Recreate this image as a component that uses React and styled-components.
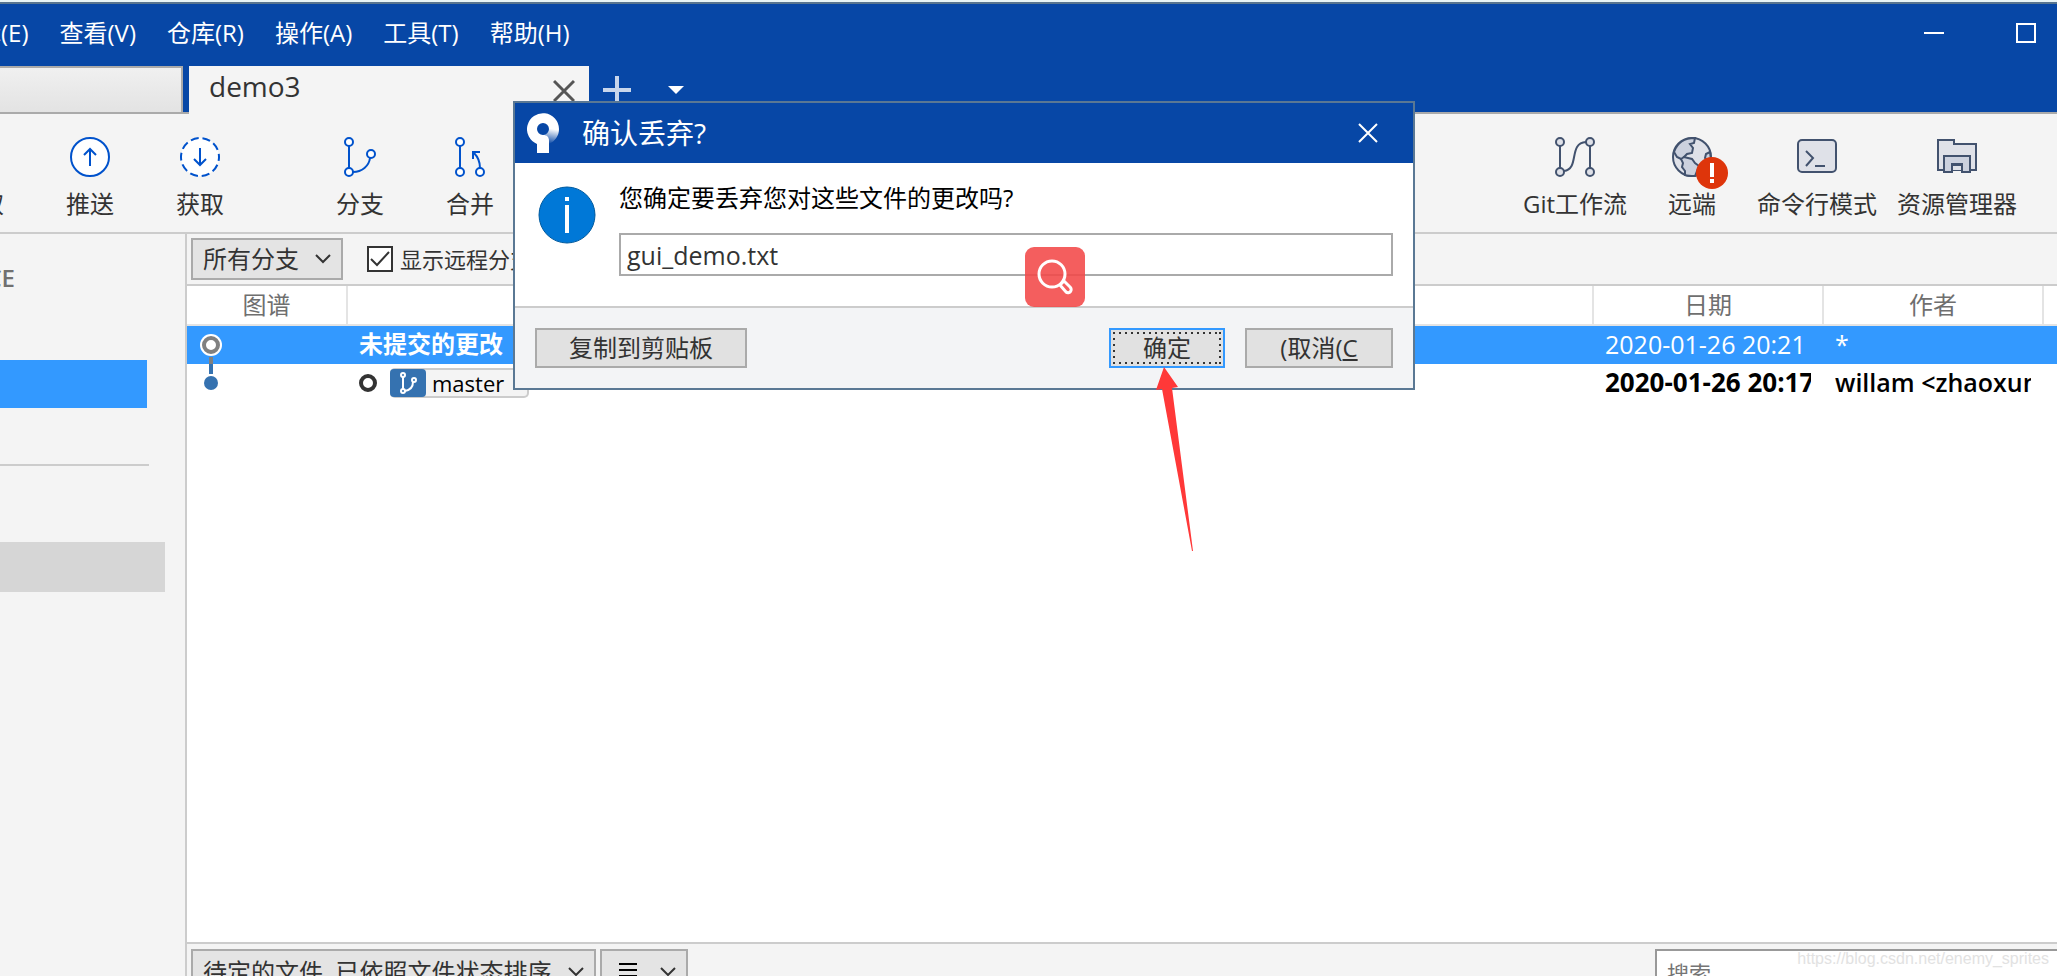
import React from 'react';
import styled, { createGlobalStyle, css } from 'styled-components';

const GlobalStyle = createGlobalStyle`
  * {
    box-sizing: border-box;
  }
  body {
    margin: 0;
    overflow: hidden;
    background: #f4f4f4;
    color: #333;
    font-family: 'Open Sans', 'Noto Sans CJK SC', sans-serif;
    font-size: 24px;
    line-height: 32px;
  }
  button, input, select {
    font: inherit;
    color: inherit;
  }
`;

const menuItems = ['编辑(E)', '查看(V)', '仓库(R)', '操作(A)', '工具(T)', '帮助(H)'];

const PushIcon = () => (
  <svg width="40" height="40" viewBox="0 0 40 40" fill="none" stroke="#0052cc" strokeWidth="2">
    <circle cx="20" cy="20" r="19" fill="#fff" />
    <path d="M20 29V12M14 18l6-6 6 6" />
  </svg>
);

const FetchIcon = () => (
  <svg width="40" height="40" viewBox="0 0 40 40" fill="none" stroke="#0052cc" strokeWidth="2">
    <circle cx="20" cy="20" r="19" fill="#fff" strokeDasharray="8 3.94" strokeDashoffset="4" />
    <path d="M20 11v17M14 22l6 6 6-6" />
  </svg>
);

const BranchIcon = () => (
  <svg width="34" height="40" viewBox="0 0 34 40" fill="#fff" stroke="#0052cc" strokeWidth="2">
    <path d="M6 9v22M10 35c9 0 16-6 17-14" fill="none" />
    <circle cx="6" cy="5" r="4" />
    <circle cx="6" cy="35" r="4" />
    <circle cx="28" cy="17" r="4" />
  </svg>
);

const MergeIcon = () => (
  <svg width="34" height="40" viewBox="0 0 34 40" fill="#fff" stroke="#0052cc" strokeWidth="2">
    <path d="M7 9v22M27 31c0-7-2-11-6-15M20 22v-7h7" fill="none" />
    <circle cx="7" cy="5" r="4" />
    <circle cx="7" cy="35" r="4" />
    <circle cx="27" cy="35" r="4" />
  </svg>
);

const FlowIcon = () => (
  <svg width="42" height="40" viewBox="0 0 42 40" fill="#dfe1e8" stroke="#42526e" strokeWidth="2">
    <path d="M6 9v22M36 9v22M10 34c16-2 4-28 22-29" fill="none" />
    <circle cx="6" cy="5" r="4" />
    <circle cx="6" cy="35" r="4" />
    <circle cx="36" cy="5" r="4" />
    <circle cx="36" cy="35" r="4" />
  </svg>
);

const GlobeIcon = () => (
  <svg width="40" height="40" viewBox="0 0 40 40" fill="#ccd1de" stroke="#42526e" strokeWidth="2">
    <circle cx="20" cy="20" r="19" fill="#dfe1e8" />
    <path d="M2 15C5 6 13 1 23 1l-1 5-4 1 3 4-1 5-5 1-3 3 2 2-5 0-4-2z" />
    <path d="M9 22l2 4-1 4 3 4 0 4c3 1 7 1 10 1l4-10-4-3-3-4-8-2z" />
    <path d="M38 15l-4 2-1 4 3 3 3-1z" />
  </svg>
);

const TerminalIcon = () => (
  <svg width="40" height="40" viewBox="0 0 40 40" fill="none" stroke="#42526e" strokeWidth="2">
    <rect x="1" y="3" width="38" height="32" rx="4" fill="#dfe1e8" />
    <path d="M9 14l7 7-7 8M18 29h10" />
  </svg>
);

const ExplorerIcon = () => (
  <svg width="40" height="40" viewBox="0 0 40 40" fill="#dfe1e8" stroke="#42526e" strokeWidth="2">
    <path d="M1 3h16v4h22v26H1z" />
    <path d="M7 19h26v16h-8v-8H15v8H7z" fill="#ccd1de" />
    <path d="M15 33v-5h10v5" />
  </svg>
);

const Chevron = () => (
  <svg width="16" height="10" viewBox="0 0 16 10" fill="none" stroke="#333" strokeWidth="2">
    <path d="M1 1l7 7 7-7" />
  </svg>
);

const actions = [
  { label: '拉取' },
  { label: '推送', icon: <PushIcon /> },
  { label: '获取', icon: <FetchIcon /> },
  { label: '分支', icon: <BranchIcon />, spaced: true },
  { label: '合并', icon: <MergeIcon /> },
];

const tools = [
  { label: 'Git工作流', icon: <FlowIcon /> },
  { label: '远端', icon: <GlobeIcon />, alert: true },
  { label: '命令行模式', icon: <TerminalIcon /> },
  { label: '资源管理器', icon: <ExplorerIcon /> },
];

export default function App() {
  return (
    <Window>
      <GlobalStyle />
      <TitleBar>
        <Menu>
          {menuItems.map((item) => (
            <MenuButton key={item}>{item}</MenuButton>
          ))}
        </Menu>
        <WindowControls>
          <IconButton aria-label="minimize">
            <svg width="20" height="20" viewBox="0 0 20 20"><path d="M0 10h20" stroke="#fff" strokeWidth="2" /></svg>
          </IconButton>
          <IconButton aria-label="maximize">
            <svg width="20" height="20" viewBox="0 0 20 20"><path d="M1 1h18v18H1z" fill="none" stroke="#fff" strokeWidth="2" /></svg>
          </IconButton>
        </WindowControls>
      </TitleBar>

      <TabBar>
        <IdleTab />
        <ActiveTab>
          demo3
          <IconButton aria-label="close tab">
            <svg width="22" height="22" viewBox="0 0 22 22"><path d="M1 2l20 20M21 2L1 22" stroke="#555" strokeWidth="3" /></svg>
          </IconButton>
        </ActiveTab>
        <TabTools>
          <IconButton aria-label="new tab">
            <svg width="28" height="28" viewBox="0 0 28 28"><path d="M14 0v28M0 14h28" stroke="#c8d6ec" strokeWidth="4" /></svg>
          </IconButton>
          <IconButton aria-label="tab list">
            <svg width="16" height="8" viewBox="0 0 16 8"><path d="M0 0h16L8 8z" fill="#fff" /></svg>
          </IconButton>
        </TabTools>
      </TabBar>

      <Toolbar>
        <Actions>
          {actions.map((action) => (
            <Action key={action.label} $spaced={action.spaced}>
              <IconBox>{action.icon}</IconBox>
              {action.label}
            </Action>
          ))}
        </Actions>
        <Tools>
          {tools.map((tool) => (
            <Tool key={tool.label}>
              <IconBox>
                {tool.icon}
                {tool.alert && (
                  <Alert>
                    <svg width="6" height="22" viewBox="0 0 6 22"><path d="M1 1h4v14H1zM1 17h4v4H1z" fill="#fff" /></svg>
                  </Alert>
                )}
              </IconBox>
              {tool.label}
            </Tool>
          ))}
        </Tools>
      </Toolbar>

      <Main>
        <Sidebar>
          <SidebarTitle>WORKSPACE</SidebarTitle>
          <SelectedItem />
          <Divider />
          <HoveredItem />
        </Sidebar>

        <Content>
          <FilterBar>
            <SelectBox $width="152px">
              <select aria-label="分支">
                <option>所有分支</option>
              </select>
              <Chevron />
            </SelectBox>
            <CheckLabel>
              <CheckInput type="checkbox" defaultChecked />
              <svg width="20" height="16" viewBox="0 0 20 16"><path d="M1 8l6 6L19 1" fill="none" stroke="#333" strokeWidth="2" /></svg>
              显示远程分支
            </CheckLabel>
          </FilterBar>

          <Log>
            <History>
              <colgroup>
                <GraphCol />
                <col />
                <DateCol />
                <AuthorCol />
                <HashCol />
              </colgroup>
              <thead>
                <tr>
                  <th>图谱</th>
                  <th />
                  <th>日期</th>
                  <th>作者</th>
                  <th />
                </tr>
              </thead>
              <tbody>
                <Commit $selected>
                  <td>
                    <GraphNode width="24" height="38" viewBox="0 0 24 38">
                      <circle cx="12" cy="19" r="11" fill="#fff" />
                      <circle cx="12" cy="19" r="7" fill="#fff" stroke="#808080" strokeWidth="4" />
                      <path d="M12 31v7" stroke="#808080" strokeWidth="4" />
                    </GraphNode>
                  </td>
                  <td><Clip $size="24px" $weight="700">未提交的更改</Clip></td>
                  <td><Clip>2020-01-26 20:21</Clip></td>
                  <td><Clip>*</Clip></td>
                  <td />
                </Commit>
                <Commit>
                  <td>
                    <GraphNode width="24" height="38" viewBox="0 0 24 38">
                      <path d="M12 0v10" stroke="#3572b0" strokeWidth="4" />
                      <circle cx="12" cy="19" r="7" fill="#3572b0" />
                    </GraphNode>
                  </td>
                  <td>
                    <Ref>
                      <svg width="18" height="18" viewBox="0 0 18 18"><circle cx="9" cy="9" r="7" fill="#fff" stroke="#333" strokeWidth="4" /></svg>
                      <Badge>
                        <BadgeIcon>
                          <svg width="18" height="22" viewBox="0 0 18 22" fill="none" stroke="#fff" strokeWidth="2">
                            <path d="M4 5v12M6 19c5-1 8-4 8-9" />
                            <circle cx="4" cy="3" r="2" />
                            <circle cx="4" cy="19" r="2" />
                            <circle cx="15" cy="8" r="2" />
                          </svg>
                        </BadgeIcon>
                        master
                      </Badge>
                    </Ref>
                  </td>
                  <td><Clip $size="26px" $weight="700">2020-01-26 20:17</Clip></td>
                  <td><Clip $weight="600">willam &lt;zhaoxun</Clip></td>
                  <td />
                </Commit>
              </tbody>
            </History>
          </Log>

          <StatusBar>
            <SelectBox $width="405px" $tall>
              <select aria-label="排序">
                <option>待定的文件, 已依照文件状态排序</option>
              </select>
              <Chevron />
            </SelectBox>
            <ViewButton aria-label="view">
              <svg width="18" height="22" viewBox="0 0 18 22"><path d="M0 3h18M0 9h18M0 15h18" stroke="#000" strokeWidth="2" /></svg>
              <Chevron />
            </ViewButton>
            <SearchInput placeholder="搜索" aria-label="搜索" />
          </StatusBar>
        </Content>
      </Main>

      <Dialog role="dialog" aria-labelledby="discard-title">
        <DialogHeader>
          <svg width="32" height="40" viewBox="0 0 32 40">
            <defs>
              <linearGradient id="fade" x1="0.6" y1="0" x2="0.4" y2="1">
                <stop offset="0" stopColor="#fff" />
                <stop offset="1" stopColor="#0747a6" />
              </linearGradient>
            </defs>
            <path d="M16 22a6 6 0 0 0 6-6h10c0 7-4 12-10 15z" fill="url(#fade)" />
            <path d="M32 16A16 16 0 1 0 10 31v9h12V28c0-4-2-6-6-6a6 6 0 1 1 6-6z" fill="#fff" />
          </svg>
          <DialogTitle id="discard-title">确认丢弃?</DialogTitle>
          <IconButton aria-label="close">
            <svg width="20" height="20" viewBox="0 0 20 20"><path d="M1 1l18 18M19 1L1 19" stroke="#fff" strokeWidth="2" /></svg>
          </IconButton>
        </DialogHeader>
        <DialogBody>
          <svg width="58" height="58" viewBox="0 0 58 58">
            <circle cx="29" cy="29" r="28" fill="#0078d7" stroke="#005a9e" />
            <path d="M27 11h4v4h-4zM27 19h4v28h-4z" fill="#fff" />
          </svg>
          <Question>
            <label htmlFor="files">您确定要丢弃您对这些文件的更改吗?</label>
            <FileInput id="files" readOnly value="gui_demo.txt" />
          </Question>
        </DialogBody>
        <DialogFooter>
          <Button $width="212px">复制到剪贴板</Button>
          <Spacer />
          <Button $width="116px" $focused>确定</Button>
          <Button $width="148px">(取消(<u>C</u></Button>
        </DialogFooter>
        <SearchBadge>
          <svg width="36" height="36" viewBox="0 0 36 36" fill="none" stroke="#fff" strokeWidth="3">
            <circle cx="15" cy="15" r="13" />
            <path d="M23 26l4-4 6 6a3 3 0 0 1-4 5z" />
          </svg>
        </SearchBadge>
        <Pointer width="40" height="188" viewBox="0 0 40 188">
          <path d="M9 0l14 20-6 1 21 163h-1L7 22l-6 1z" fill="#ff3838" />
        </Pointer>
      </Dialog>

      <Watermark>https://blog.csdn.net/enemy_sprites</Watermark>
    </Window>
  );
}

const Window = styled.div`
  position: relative;
  display: flex;
  flex-direction: column;
  height: 100vh;
  overflow: hidden;
  border-top: 2px solid #e8f4f6;
`;

const TitleBar = styled.header`
  display: flex;
  flex: none;
  justify-content: space-between;
  height: 64px;
  padding-right: 21px;
  border-top: 2px solid #58758f;
  background: #0747a6;
  color: #fff;
`;

const Menu = styled.nav`
  display: flex;
  gap: 31px;
  height: 58px;
  margin-left: -47px;
`;

const MenuButton = styled.button`
  padding: 0;
  border: 0;
  background: none;
  white-space: nowrap;
`;

const WindowControls = styled.div`
  display: flex;
  gap: 72px;
  height: 58px;
`;

const IconButton = styled.button`
  display: flex;
  align-items: center;
  justify-content: center;
  padding: 0;
  border: 0;
  background: none;
`;

const TabBar = styled.div`
  display: flex;
  flex: none;
  height: 48px;
  background: #0747a6;
  box-shadow: inset 0 -2px #aaa;
`;

const IdleTab = styled.div`
  width: 183px;
  height: 46px;
  margin-right: 6px;
  border: solid #aaa;
  border-width: 2px 2px 0 0;
  background: linear-gradient(#f0f0f0, #e3e3e3);
`;

const ActiveTab = styled.div`
  display: flex;
  justify-content: space-between;
  width: 400px;
  padding: 0 14px 0 20px;
  background: #f4f4f4;
  font-size: 28px;
  line-height: 40px;
`;

const TabTools = styled.div`
  display: flex;
  gap: 37px;
  padding-left: 14px;
`;

const Toolbar = styled.div`
  display: flex;
  flex: none;
  justify-content: space-between;
  height: 120px;
  padding-top: 23px;
  border-bottom: 2px solid #ccc;
`;

const Actions = styled.div`
  display: flex;
  align-items: flex-start;
  margin-left: -75px;
`;

const Action = styled.button`
  display: flex;
  flex-direction: column;
  align-items: center;
  gap: 11px;
  width: 110px;
  margin-left: ${(p) => (p.$spaced ? '50px' : '0')};
  padding: 0;
  border: 0;
  background: none;
`;

const Tools = styled.div`
  display: flex;
  align-items: flex-start;
  gap: 20px;
  padding-right: 40px;
`;

const Tool = styled(Action)`
  width: auto;
  min-width: 90px;
  margin: 0;
  white-space: nowrap;
`;

const IconBox = styled.span`
  position: relative;
  display: flex;
  height: 40px;
`;

const Alert = styled.span`
  position: absolute;
  top: 20px;
  left: 24px;
  display: flex;
  align-items: center;
  justify-content: center;
  width: 32px;
  height: 32px;
  border-radius: 50%;
  background: #de350b;
`;

const Main = styled.div`
  display: flex;
  flex: 1;
  min-height: 0;
`;

const Sidebar = styled.aside`
  flex: none;
  width: 187px;
  padding-top: 28px;
  border-right: 2px solid #ccc;
`;

const SidebarTitle = styled.div`
  display: flex;
  justify-content: flex-end;
  width: 15px;
  color: #707070;
  font-weight: 600;
`;

const SelectedItem = styled.div`
  width: 147px;
  height: 48px;
  margin-top: 66px;
  background: #3399ff;
`;

const Divider = styled.hr`
  width: 149px;
  height: 2px;
  margin: 56px 0 76px;
  border: 0;
  background: #ccc;
`;

const HoveredItem = styled.div`
  width: 165px;
  height: 50px;
  background: #d6d6d6;
`;

const Content = styled.main`
  display: flex;
  flex: 1;
  flex-direction: column;
  min-width: 0;
`;

const FilterBar = styled.div`
  display: flex;
  flex: none;
  align-items: center;
  gap: 24px;
  height: 52px;
  padding-left: 4px;
  border-bottom: 2px solid #ccc;
`;

const SelectBox = styled.div`
  display: grid;
  flex: none;
  align-items: center;
  width: ${(p) => p.$width};
  height: ${(p) => (p.$tall ? '46px' : '42px')};

  select, svg {
    grid-area: 1 / 1;
  }
  select {
    width: 100%;
    height: 100%;
    padding: 0 36px 0 10px;
    appearance: none;
    border: 2px solid #aaa;
    border-radius: 0;
    background: #e4e4e4;
  }
  svg {
    justify-self: end;
    margin-right: 12px;
    pointer-events: none;
  }
`;

const CheckLabel = styled.label`
  display: grid;
  grid-template-columns: 26px auto;
  align-items: center;
  column-gap: 7px;
  font-size: 22px;

  svg {
    grid-area: 1 / 1;
    justify-self: center;
    z-index: 1;
  }
`;

const CheckInput = styled.input`
  grid-area: 1 / 1;
  width: 26px;
  height: 26px;
  margin: 0;
  appearance: none;
  border: 2px solid #333;
  background: #fff;
`;

const Log = styled.div`
  flex: 1;
  min-height: 0;
  background: #fff;
`;

const History = styled.table`
  width: 100%;
  table-layout: fixed;
  border-spacing: 0;

  th {
    height: 40px;
    padding: 0;
    border: solid #e4e4e4;
    border-width: 0 2px 2px 0;
    color: #6f6f6f;
    font-weight: 400;
  }
  th:last-child {
    border-right: 0;
  }
  td {
    height: 38px;
    padding: 0 13px 0 11px;
  }
`;

const GraphCol = styled.col`
  width: 161px;
`;

const DateCol = styled.col`
  width: 230px;
`;

const AuthorCol = styled.col`
  width: 220px;
`;

const HashCol = styled.col`
  width: 13px;
`;

const Commit = styled.tr`
  background: ${(p) => (p.$selected ? '#3399ff' : '#fff')};
  color: ${(p) => (p.$selected ? '#fff' : '#000')};
`;

const GraphNode = styled.svg`
  display: block;
  margin-left: 1px;
`;

const Clip = styled.span`
  display: block;
  overflow: hidden;
  padding-bottom: 2px;
  font-size: ${(p) => p.$size || '25px'};
  font-weight: ${(p) => p.$weight || '400'};
  white-space: nowrap;
`;

const Ref = styled.div`
  display: flex;
  align-items: center;
  gap: 13px;
`;

const Badge = styled.span`
  display: flex;
  align-items: center;
  gap: 6px;
  width: 139px;
  height: 30px;
  border: 2px solid #ccc;
  border-left: 0;
  border-radius: 5px;
  background: #f4f4f4;
  font-size: 22px;
  line-height: 24px;
`;

const BadgeIcon = styled.span`
  display: flex;
  align-items: center;
  justify-content: center;
  width: 36px;
  height: 28px;
  border-radius: 4px;
  background: #3572b0;
`;

const StatusBar = styled.div`
  display: flex;
  flex: none;
  gap: 4px;
  height: 34px;
  padding: 5px 0 0 4px;
  border-top: 2px solid #ccc;
`;

const ViewButton = styled.button`
  display: flex;
  flex: none;
  align-items: center;
  justify-content: space-between;
  width: 88px;
  height: 46px;
  padding: 0 10px 0 17px;
  border: 2px solid #aaa;
  background: #e4e4e4;
`;

const SearchInput = styled.input`
  width: 402px;
  height: 48px;
  margin-left: auto;
  padding: 0 10px;
  border: 2px solid #999;
  border-right: 0;
  border-radius: 0;
  background: #fff;
  font-size: 22px;

  &::placeholder {
    color: #757575;
  }
`;

const Dialog = styled.section`
  position: absolute;
  top: 99px;
  left: 513px;
  width: 902px;
  border: 2px solid #5a7894;
  background: #fff;
`;

const DialogHeader = styled.div`
  display: flex;
  align-items: center;
  gap: 23px;
  height: 60px;
  padding: 0 35px 0 12px;
  background: #0747a6;
  color: #fff;
`;

const DialogTitle = styled.h1`
  flex: 1;
  margin: 0;
  font-size: 28px;
  font-weight: 400;
`;

const DialogBody = styled.div`
  display: flex;
  align-items: flex-start;
  gap: 23px;
  height: 145px;
  padding: 23px 20px 0 23px;
  border-bottom: 2px solid #ccc;
  color: #000;
`;

const Question = styled.div`
  display: flex;
  flex: 1;
  flex-direction: column;
  gap: 19px;
  margin-top: -4px;
`;

const FileInput = styled.input`
  height: 43px;
  padding: 0 6px;
  border: 2px solid #aaa;
  border-radius: 0;
  color: #333;
  font-size: 25px;
`;

const DialogFooter = styled.div`
  display: flex;
  gap: 20px;
  padding: 20px;
  background: #f3f4f6;
`;

const Spacer = styled.div`
  flex: 1;
`;

const dotsX = 'repeating-linear-gradient(90deg, #333 0 2px, transparent 2px 6px)';
const dotsY = 'repeating-linear-gradient(#333 0 2px, transparent 2px 6px)';

const Button = styled.button`
  width: ${(p) => p.$width};
  height: 40px;
  padding: 0;
  border: 2px solid #aaa;
  background: #e1e1e1;

  ${(p) => p.$focused && css`
    position: relative;
    border-color: #3399ff;
    outline: 0;

    &::after {
      content: '';
      position: absolute;
      inset: 2px;
      background:
        ${dotsX} top / 100% 2px no-repeat,
        ${dotsX} bottom / 100% 2px no-repeat,
        ${dotsY} left / 2px 100% no-repeat,
        ${dotsY} right / 2px 100% no-repeat;
    }
  `}
`;

const SearchBadge = styled.div`
  position: absolute;
  top: 144px;
  left: 510px;
  display: flex;
  align-items: center;
  justify-content: center;
  width: 60px;
  height: 60px;
  border-radius: 9px;
  background: rgba(242, 72, 72, 0.88);
`;

const Pointer = styled.svg`
  position: absolute;
  top: 264px;
  left: 640px;
`;

const Watermark = styled.div`
  position: absolute;
  right: 8px;
  bottom: 7px;
  color: #e2e2e2;
  font: 16px/20px 'Liberation Sans', Arial, sans-serif;
`;
